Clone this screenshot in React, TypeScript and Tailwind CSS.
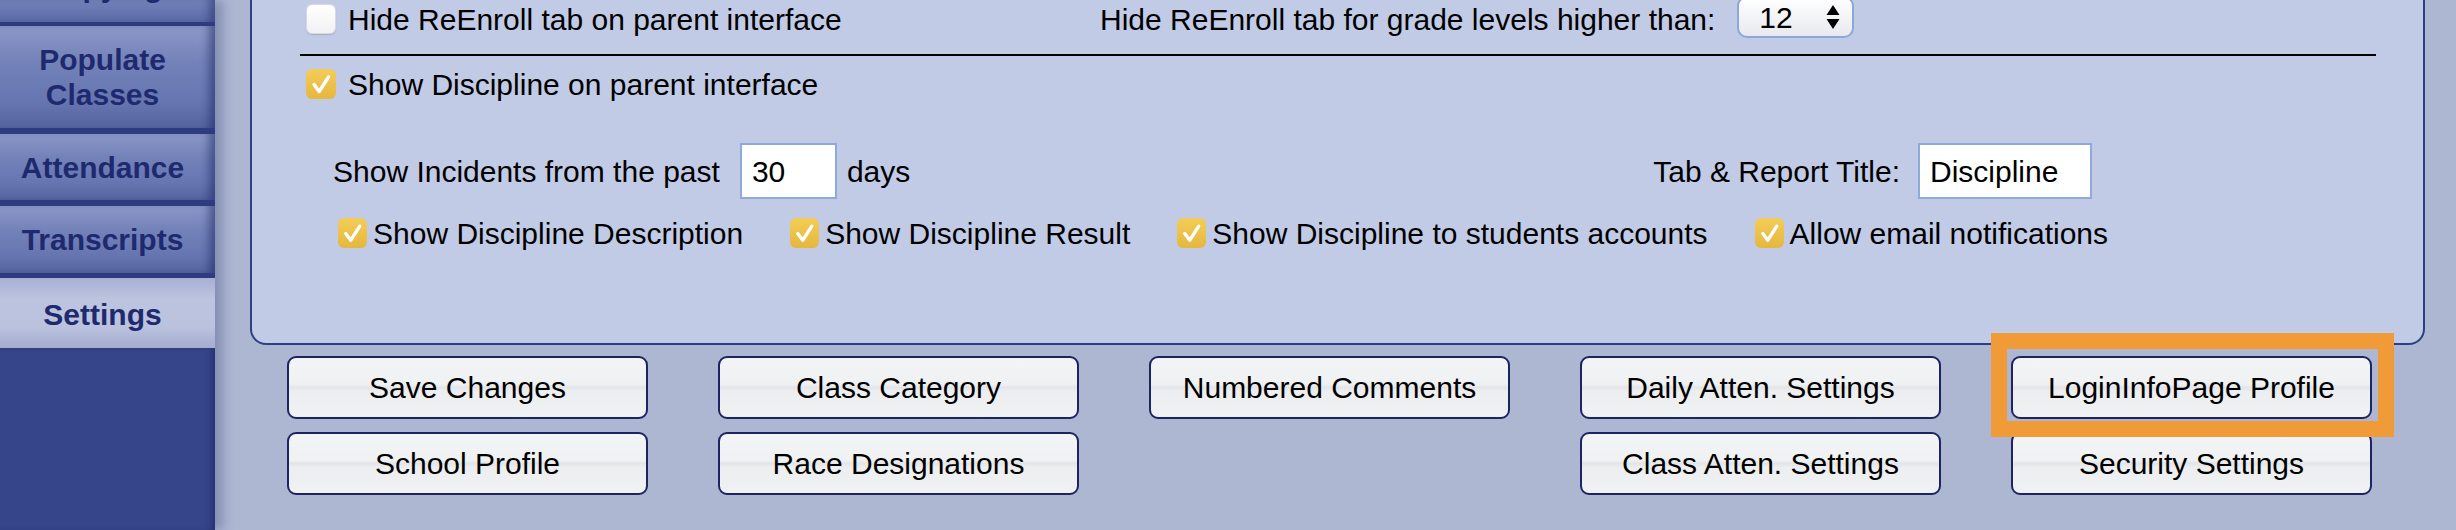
import type { ReactNode } from 'react';

const font = "font-['Liberation_Sans',Arial,sans-serif]";

// left nav tabs
const tabs = [
  { label: ['Populate', 'Classes'], h: 'h-[102px]', b: 'border-b-[6px]' },
  { label: ['Attendance'], h: 'h-[66px]', b: 'border-b-[6px]' },
  { label: ['Transcripts'], h: 'h-[67px]', b: 'border-b-[5px]' },
];

const buttons: (string | null)[][] = [
  ['Save Changes', 'Class Category', 'Numbered Comments', 'Daily Atten. Settings', 'LoginInfoPage Profile'],
  ['School Profile', 'Race Designations', null, 'Class Atten. Settings', 'Security Settings'],
];

function Check({ checked, size = 'w-[30px] h-[30px]' }: { checked: boolean; size?: string }) {
  if (!checked) {
    return (
      <span
        className={`${size} shrink-0 rounded-[6px] bg-gradient-to-b from-white to-[#f2f2f4] border border-[#d6d9e2] shadow-[0_1px_1px_rgba(0,0,0,0.15)]`}
      />
    );
  }
  return (
    <span
      className={`${size} shrink-0 rounded-[6px] bg-gradient-to-b from-[#f3cd57] to-[#e5b73e] flex items-center justify-center`}
    >
      <svg viewBox="0 0 30 30" className="w-full h-full">
        <path d="M8 15.5 L13.2 22.5 L22.5 8" fill="none" stroke="white" strokeWidth="3.4" strokeLinecap="round" strokeLinejoin="round" />
      </svg>
    </span>
  );
}

function Btn({ children }: { children: ReactNode }) {
  return (
    <div className="h-[63px] rounded-[9px] border-2 border-[#1c2464] bg-[linear-gradient(to_bottom,#f3f4f6_0%,#f0f1f3_44%,#e3e5e8_50%,#eceef0_57%,#f0f1f3_100%)] flex items-center justify-center text-[30px] text-black">
      {children}
    </div>
  );
}

export default function App() {
  return (
    <div className={`${font} w-[2456px] h-[530px] bg-[#adb7d2] flex overflow-hidden`}>
      {/* sidebar */}
      <aside className="w-[215px] shrink-0 flex flex-col relative z-10 shadow-[8px_0_10px_rgba(60,72,130,0.35)]">
        <div className="h-[26px] overflow-hidden bg-gradient-to-b from-[#7483bb] to-[#5b6aa6] border-b-[4px] border-[#2e3b7e] shadow-[inset_-10px_0_8px_-4px_rgba(30,40,100,0.5)]">
          <div className="-mt-[31px] pr-[10px] text-center text-[30px] font-bold text-[#1f2a6e] leading-[35px]">Copying</div>
        </div>
        {tabs.map((t) => (
          <div
            key={t.label[0]}
            className={`${t.h} ${t.b} box-content border-[#2e3b7e] bg-[linear-gradient(to_bottom,#8c98c8_0%,#7482ba_35%,#6675b0_75%,#55639f_100%)] shadow-[inset_-10px_0_8px_-4px_rgba(30,40,100,0.55)] flex flex-col items-center justify-center pr-[10px]`}
          >
            {t.label.map((l) => (
              <span key={l} className="text-[30px] font-bold text-[#1f2a6e] leading-[35px]">
                {l}
              </span>
            ))}
          </div>
        ))}
        <div className="h-[70px] bg-[linear-gradient(to_bottom,#a7b0d3_0%,#bcc4df_30%,#bac2de_70%,#a4add0_100%)] flex items-center justify-center pr-[10px] pt-[2px]">
          <span className="text-[30px] font-bold text-[#1f2a6e]">Settings</span>
        </div>
        <div className="flex-1 bg-[#36448a] shadow-[inset_-6px_0_6px_-3px_rgba(20,30,80,0.5)]" />
      </aside>

      {/* main area */}
      <main className="flex-1 pl-[35px]">
        <div className="w-[2175px] h-[345px] bg-[#c1cbe6] border-2 border-t-0 border-[#2e3f85] rounded-b-[16px] flex flex-col text-[30px] text-black">
          {/* row 1 */}
          <div className="h-[38px] flex items-center pl-[54px]">
            <div className="w-[794px] flex items-center gap-[12px]">
              <Check checked={false} />
              <span>Hide ReEnroll tab on parent interface</span>
            </div>
            <span>Hide ReEnroll tab for grade levels higher than:</span>
            <div className="ml-[22px] self-start -mt-[4px] h-[42px] w-[117px] rounded-[10px] border-2 border-[#8aa8dc] bg-gradient-to-b from-white to-[#e7e9ee] flex items-center pl-[20px] pr-[12px]">
              <span className="flex-1">12</span>
              <svg viewBox="0 0 14 24" className="w-[14px] h-[24px]">
                <path d="M7 0 L13.5 10 L0.5 10 Z" fill="black" />
                <path d="M7 24 L13.5 14 L0.5 14 Z" fill="black" />
              </svg>
            </div>
          </div>

          <div className="mt-[16px] ml-[48px] mr-[47px] h-[2px] bg-black" />

          {/* row 2 */}
          <div className="mt-[13px] h-[30px] flex items-center gap-[12px] pl-[54px]">
            <Check checked />
            <span>Show Discipline on parent interface</span>
          </div>

          {/* row 3 */}
          <div className="mt-[44px] h-[56px] flex items-center pl-[81px] pr-[331px]">
            <span>Show Incidents from the past</span>
            <div className="ml-[20px] w-[97px] h-[56px] bg-white border-2 border-[#8eaadc] flex items-center pl-[10px]">30</div>
            <span className="ml-[10px]">days</span>
            <span className="ml-auto">Tab &amp; Report Title:</span>
            <div className="ml-[18px] w-[174px] h-[56px] bg-white border-2 border-[#8eaadc] flex items-center pl-[10px]">Discipline</div>
          </div>

          {/* row 4 */}
          <div className="mt-[19px] h-[30px] flex items-center gap-[47px] pl-[86px]">
            {['Show Discipline Description', 'Show Discipline Result', 'Show Discipline to students accounts', 'Allow email notifications'].map((s) => (
              <div key={s} className="flex items-center gap-[6px]">
                <Check checked size="w-[29px] h-[30px]" />
                <span>{s}</span>
              </div>
            ))}
          </div>
        </div>

        {/* buttons */}
        <div className="mt-[11px] pl-[37px] grid grid-cols-[repeat(5,361px)] gap-x-[70px] gap-y-[13px]">
          {buttons.flat().map((b, i) =>
            b === null ? (
              <div key={i} />
            ) : b === 'LoginInfoPage Profile' ? (
              <div key={i} className="relative">
                <Btn>{b}</Btn>
                <div className="absolute -left-[20px] -right-[22px] -top-[23px] -bottom-[18px] border-[16px] border-[#f09a38] pointer-events-none" />
              </div>
            ) : (
              <Btn key={i}>{b}</Btn>
            )
          )}
        </div>
      </main>
    </div>
  );
}
